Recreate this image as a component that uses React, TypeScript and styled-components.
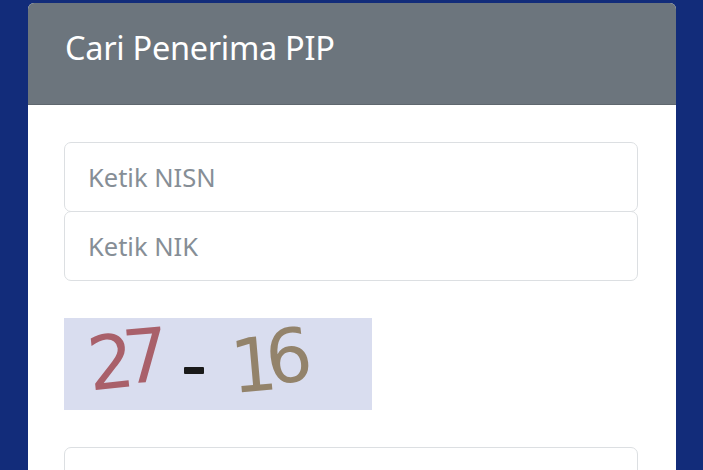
import React from "react";
import styled, { createGlobalStyle } from "styled-components";

const Global = createGlobalStyle`
  html, body { margin: 0; padding: 0; background: #122c7a; }
  body { font-family: "Noto Sans", "Open Sans", sans-serif; overflow: hidden; }
  * { box-sizing: border-box; }
`;

const Page = styled.div`
  height: 470px;
  padding: 3px 27px 0 28px;
  background: #122c7a;
`;

const Card = styled.div`
  width: 648px;
  height: 467px;
  background: #ffffff;
  border-radius: 6px 6px 0 0;
  overflow: hidden;
  display: flex;
  flex-direction: column;
`;

const Header = styled.div`
  flex-shrink: 0;
  height: 102px;
  background: #6c757d;
  padding: 23px 37px 0;
  border-bottom: 1px solid #5f676e;
`;

const Title = styled.h1`
  margin: 0;
  font-weight: 400;
  font-size: 32.5px;
  line-height: 44px;
  color: #ffffff;
  letter-spacing: -0.3px;
`;

const Body = styled.div`
  padding: 37px 37px 0 36px;
  display: flex;
  flex-direction: column;
  flex-shrink: 0;
`;

const Input = styled.input<{ $mt?: number }>`
  flex-shrink: 0;
  width: 574px;
  height: 70px;
  margin-top: ${(p) => p.$mt ?? 0}px;
  border: 1px solid #dcdfe2;
  border-radius: 7px;
  padding: 0 23px;
  font-family: "Noto Sans", "Open Sans", sans-serif;
  font-size: 25.5px;
  color: #495057;
  background: #fff;
  outline: none;
  &::placeholder { color: #868e96; }
`;

const Captcha = styled.div`
  flex-shrink: 0;
  margin-top: 37px;
  width: 308px;
  height: 92px;
  background: #d9ddef;
  display: flex;
  align-items: center;
  padding-left: 27px;
  font-family: "DejaVu Sans", Verdana, sans-serif;
`;

const Digit = styled.span<{ $color: string; $rot: number; $dy: number; $ml?: number }>`
  display: inline-block;
  color: ${(p) => p.$color};
  font-size: 62px;
  line-height: 1;
  margin-left: ${(p) => p.$ml ?? 0}px;
  transform: translateY(${(p) => p.$dy}px) rotate(${(p) => p.$rot}deg) scale(1.17, 1.2);
  transform-origin: center;
  opacity: 0.92;
`;

const Dash = styled.span`
  display: inline-block;
  width: 20px;
  height: 7px;
  background: #1a1a1a;
  margin: 12px 0 0 18px;
  border-radius: 1px;
`;

const digits = [
  { ch: "2", color: "#a5565f", rot: -6, dy: -1, ml: 0 },
  { ch: "7", color: "#a5565f", rot: -5, dy: -7, ml: -4 },
];
const digits2 = [
  { ch: "1", color: "#8e7c60", rot: -5, dy: 2, ml: 30 },
  { ch: "6", color: "#8e7c60", rot: -7, dy: -7, ml: -4 },
];

export default function App() {
  return (
    <>
      <Global />
      <Page>
        <Card>
          <Header>
            <Title>Cari Penerima PIP</Title>
          </Header>
          <Body>
            <Input placeholder="Ketik NISN" />
            <Input placeholder="Ketik NIK" $mt={-1} />
            <Captcha aria-label="27 - 16">
              {digits.map((d) => (
                <Digit key={d.ch} $color={d.color} $rot={d.rot} $dy={d.dy} $ml={d.ml}>
                  {d.ch}
                </Digit>
              ))}
              <Dash />
              {digits2.map((d) => (
                <Digit key={d.ch} $color={d.color} $rot={d.rot} $dy={d.dy} $ml={d.ml}>
                  {d.ch}
                </Digit>
              ))}
            </Captcha>
            <Input $mt={37} />
          </Body>
        </Card>
      </Page>
    </>
  );
}
